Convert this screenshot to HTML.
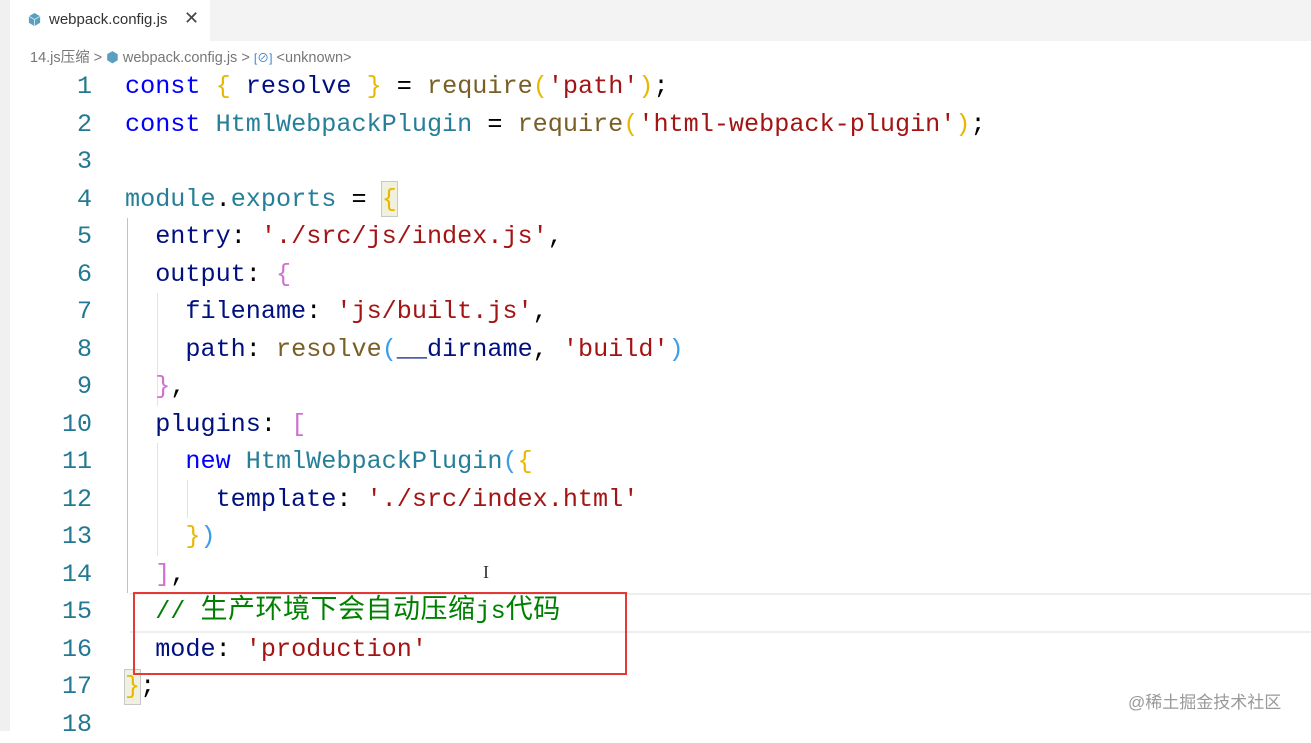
<!DOCTYPE html>
<html><head><meta charset="utf-8"><style>
body{margin:0;width:1311px;height:731px;overflow:hidden;background:#fff;position:relative;font-family:"Liberation Sans","Noto Sans CJK SC",sans-serif}
.tabbar{position:absolute;left:0;top:0;width:1311px;height:41px;background:#f3f3f3}
.tab{position:absolute;left:10px;top:0;width:200px;height:41px;background:#fff;font-size:15px;color:#333}
.side{position:absolute;left:0;top:0;width:10px;height:731px;background:#f0f0f0}
.crumb{position:absolute;left:30px;top:46px;font-size:14.5px;color:#777;white-space:nowrap}
.ln{position:absolute;left:20px;width:72px;text-align:right;font:25px "Liberation Mono",monospace;color:#237893}
.code{position:absolute;left:125px;font:25.17px "Liberation Mono","Noto Sans CJK SC",monospace;white-space:pre;color:#001080;line-height:37.5px}
.k{color:#0000ff}.s{color:#a31515}.f{color:#795e26}.c{color:#267f99}.y{color:#e8b800}.p{color:#d070d0}.b{color:#3c9ee8}.g{color:#008000}.t{color:#000}
.cj{font-size:27px;font-family:"Noto Sans CJK SC",sans-serif;letter-spacing:0.5px;line-height:1}
.guide{position:absolute;width:1px;background:#e3e3e3}
</style></head><body>
<div class="tabbar"></div>
<div class="side"></div>
<div class="tab"><svg style="position:absolute;left:17px;top:12px" width="15" height="15" viewBox="0 0 16 16"><path d="M8 1l6 3.5v7L8 15 2 11.5v-7z" fill="#5a9fc0"/><path d="M8 8l6-3.5M8 8L2 4.5M8 8v7" stroke="#cfe6f2" stroke-width="1"/></svg><span style="position:absolute;left:39px;top:11px">webpack.config.js</span><span style="position:absolute;left:174px;top:8px;font-size:18px;color:#444">✕</span></div>
<div class="crumb">14.js压缩 &gt; <span style="color:#5a9fc0">⬢</span> webpack.config.js &gt; <span style="color:#3a7fd0;font-size:12px">[⊘]</span> &lt;unknown&gt;</div>
<div style="position:absolute;left:127px;top:218px;width:1px;height:375px;background:#c8c890"></div>
<div class="guide" style="left:157px;top:293px;height:113px"></div>
<div class="guide" style="left:157px;top:443px;height:113px"></div>
<div class="guide" style="left:187px;top:480px;height:38px"></div>
<div style="position:absolute;left:130px;top:593px;width:1181px;height:36px;border-top:2px solid #eee;border-bottom:2px solid #eee"></div>
<div style="position:absolute;left:381px;top:181px;width:15px;height:34px;background:#f0f0e0;border:1px solid #c8c8c8"></div>
<div style="position:absolute;left:124px;top:669px;width:15px;height:34px;background:#f0f0e0;border:1px solid #c8c8c8"></div>
<div style="position:absolute;left:133px;top:592px;width:490px;height:79px;border:2px solid #e53935"></div>
<div style="position:absolute;left:20px;top:68px">
<div class="ln" style="left:0;top:0;line-height:37.5px;width:72px">1<br>2<br>3<br>4<br>5<br>6<br>7<br>8<br>9<br>10<br>11<br>12<br>13<br>14<br>15<br>16<br>17<br>18</div>
</div>
<div class="code" style="top:68px"><span class="k">const</span> <span class="y">{</span> resolve <span class="y">}</span> <span class="t">=</span> <span class="f">require</span><span class="y">(</span><span class="s">'path'</span><span class="y">)</span><span class="t">;</span>
<span class="k">const</span> <span class="c">HtmlWebpackPlugin</span> <span class="t">=</span> <span class="f">require</span><span class="y">(</span><span class="s">'html-webpack-plugin'</span><span class="y">)</span><span class="t">;</span>

<span class="c">module</span><span class="t">.</span><span class="c">exports</span> <span class="t">=</span> <span class="y">{</span>
  entry<span class="t">:</span> <span class="s">'./src/js/index.js'</span><span class="t">,</span>
  output<span class="t">:</span> <span class="p">{</span>
    filename<span class="t">:</span> <span class="s">'js/built.js'</span><span class="t">,</span>
    path<span class="t">:</span> <span class="f">resolve</span><span class="b">(</span>__dirname<span class="t">,</span> <span class="s">'build'</span><span class="b">)</span>
  <span class="p">}</span><span class="t">,</span>
  plugins<span class="t">:</span> <span class="p">[</span>
    <span class="k">new</span> <span class="c">HtmlWebpackPlugin</span><span class="b">(</span><span class="y">{</span>
      template<span class="t">:</span> <span class="s">'./src/index.html'</span>
    <span class="y">}</span><span class="b">)</span>
  <span class="p">]</span><span class="t">,</span>
  <span class="g">// <span class="cj">生产环境下会自动压缩</span>js<span class="cj">代码</span></span>
  mode<span class="t">:</span> <span class="s">'production'</span>
<span class="y">}</span><span class="t">;</span>
</div>
<div style="position:absolute;left:483px;top:562px;font:18px 'Liberation Serif',serif;color:#333">I</div>
<div style="position:absolute;left:1128px;top:688px;font-size:17px;color:#999">@稀土掘金技术社区</div>
</body></html>
